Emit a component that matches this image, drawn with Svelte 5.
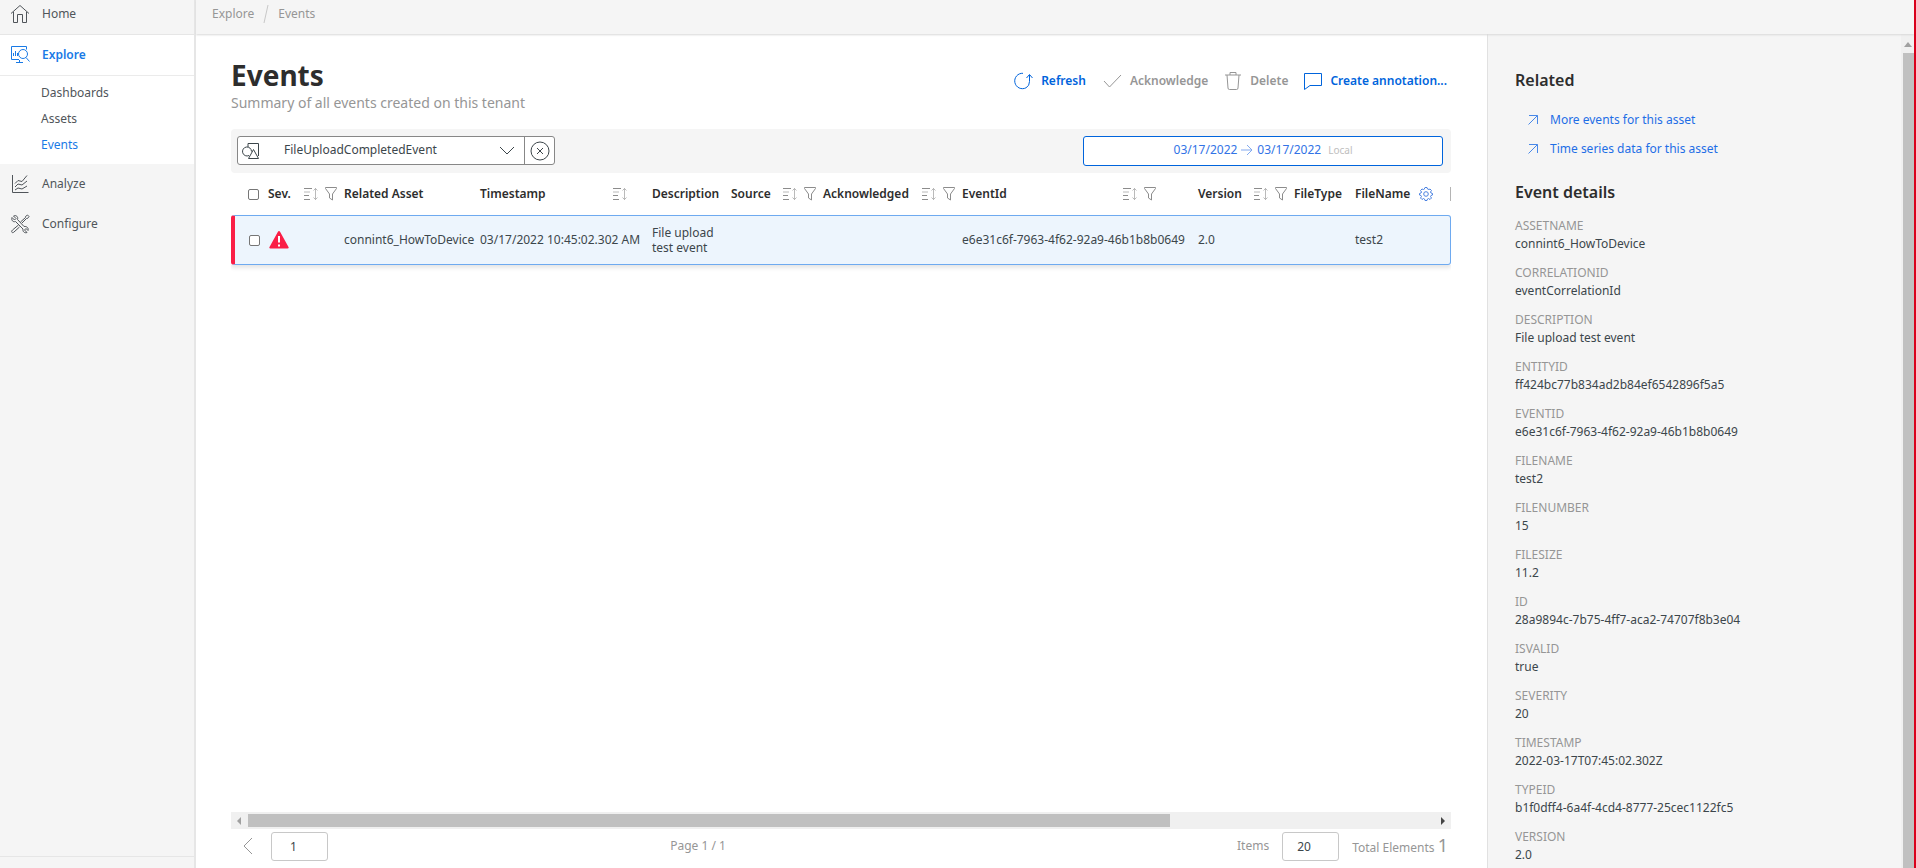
<script>
    let page = "1";
    let pageSize = "20";
    let typeFilter = "FileUploadCompletedEvent";
    let allChecked = false;
    let rowChecked = false;

    const subItems = ["Dashboards", "Assets", "Events"];

    const columns = [
        { name: "Sev.", width: 76, sort: true, filter: true },
        { name: "Related Asset", width: 136 },
        { name: "Timestamp", width: 172, sort: true, wide: true },
        { name: "Description", width: 79 },
        { name: "Source", width: 92, sort: true, filter: true },
        { name: "Acknowledged", width: 139, sort: true, filter: true },
        { name: "EventId", width: 236, sort: true, filter: true, wider: true },
        { name: "Version", width: 96, sort: true, filter: true },
        { name: "FileType", width: 61 },
    ];

    const details = [
        ["ASSETNAME", "connint6_HowToDevice"],
        ["CORRELATIONID", "eventCorrelationId"],
        ["DESCRIPTION", "File upload test event"],
        ["ENTITYID", "ff424bc77b834ad2b84ef6542896f5a5"],
        ["EVENTID", "e6e31c6f-7963-4f62-92a9-46b1b8b0649"],
        ["FILENAME", "test2"],
        ["FILENUMBER", "15"],
        ["FILESIZE", "11.2"],
        ["ID", "28a9894c-7b75-4ff7-aca2-74707f8b3e04"],
        ["ISVALID", "true"],
        ["SEVERITY", "20"],
        ["TIMESTAMP", "2022-03-17T07:45:02.302Z"],
        ["TYPEID", "b1f0dff4-6a4f-4cd4-8777-25cec1122fc5"],
        ["VERSION", "2.0"],
    ];
</script>

<div class="app">
    <nav class="sidebar">
        <a class="item home" href="#home">
            <svg width="20" height="20" viewBox="0 0 20 20">
                <path d="M1 9.500 10 1.500l9 8M3.500 8v10.500h4v-8h5v8h4V8" />
            </svg>
            Home
        </a>
        <a class="item active" href="#explore">
            <svg width="20" height="20" viewBox="0 0 20 20">
                <path d="M9 14.500H1.500v-13h15v3M6 17.500h7M9.500 15v2.500M3.500 8v3M5.500 6v5M7.500 8v3" />
                <circle cx="13" cy="9" r="4.500" />
                <path d="m16 12.500 3.500 4" />
            </svg>
            Explore
        </a>
        <ul>
            {#each subItems as item}
                <li><a href="#{item}" class:current={item === "Events"}>{item}</a></li>
            {/each}
        </ul>
        <a class="item" href="#analyze">
            <svg width="20" height="20" viewBox="0 0 20 20">
                <path d="M2.500 1v17.500h16M5 9.500l3-3 4 1 5-6M5 13l3-3 4 1 5-4M5 16l3-2 4 1 5-3" />
            </svg>
            Analyze
        </a>
        <a class="item" href="#configure">
            <svg width="20" height="20" viewBox="0 0 20 20">
                <path d="M2 3.500 4.500 6 6 4.500 3.500 2C6 .5 8.500 3 7.500 5.500l6.500 7c2.500-.5 5 1.500 4 4L16 14.500 14.500 16l2.500 2.500c-2.500 1-4.500-1-4-3.500L5.500 7.500C3 8.500 1 6 2 3.500Z" />
                <path d="m10.500 8 5-4.500V2.500L17.500 1 19 2.500 17.500 4.500h-1L12 9M8.500 11 2.500 16c-2 2 0 3.500 1.500 2L9.500 13" />
            </svg>
            Configure
        </a>
        <div class="nav-end"></div>
    </nav>

    <header class="topbar">
        <a href="#explore">Explore</a>
        <svg width="6" height="20" viewBox="0 0 6 20"><path d="M5 1 1 19" /></svg>
        <a href="#events">Events</a>
    </header>

    <main>
        <div class="heading">
            <div>
                <h1>Events</h1>
                <p>Summary of all events created on this tenant</p>
            </div>
            <div class="actions">
                <button>
                    <svg width="20" height="20" viewBox="0 0 20 20">
                        <path d="M10 2.300a7.700 7.700 0 1 0 3 14.500q3.500-1.800 3.500-6.300V4M13.500 7l3-3.500 3 3.500" />
                    </svg>
                    Refresh
                </button>
                <button disabled>
                    <svg width="20" height="20" viewBox="0 0 20 20"><path d="m2 10 5.500 6L19 4" /></svg>
                    Acknowledge
                </button>
                <button disabled>
                    <svg width="18" height="20" viewBox="0 0 18 20">
                        <path d="M1 4h16M6 4V1.500h6V4M3 4l1 13q0 1.500 1.500 1.500h7q1.500 0 1.500-1.500l1-13" />
                    </svg>
                    Delete
                </button>
                <button>
                    <svg width="18" height="20" viewBox="0 0 18 20"><path d="M.5 2.500h17v12H6l-5.500 4Z" /></svg>
                    Create annotation...
                </button>
            </div>
        </div>

        <div class="filters">
            <div class="type">
                <svg width="18" height="18" viewBox="0 0 18 18">
                    <path d="M6 5V1.500h10.500V14M6.500 16.500l5-9 5 9Z" />
                    <path d="M7 13.500a4.500 4.500 0 1 1 2.500-4" />
                </svg>
                <select aria-label="Event type" bind:value={typeFilter}>
                    <option>FileUploadCompletedEvent</option>
                </select>
                <svg class="chevron" width="16" height="10" viewBox="0 0 16 10"><path d="m1 1 7 7 7-7" /></svg>
                <button aria-label="Clear event type">
                    <svg width="20" height="20" viewBox="0 0 20 20">
                        <circle cx="10" cy="10" r="9" />
                        <path d="m7 7 6 6m0-6-6 6" />
                    </svg>
                </button>
            </div>
            <button class="range">
                03/17/2022
                <svg width="12" height="12" viewBox="0 0 12 12"><path d="M0 6h11M6 1l5 5-5 5" /></svg>
                03/17/2022
                <small>Local</small>
            </button>
        </div>

        <div class="grid">
            <table>
                <colgroup>
                    <col style="width:37px" />
                    {#each columns as c}
                        <col style="width:{c.width}px" />
                    {/each}
                    <col />
                </colgroup>
                <thead>
                    <tr>
                        <th class="check"><input type="checkbox" aria-label="Select all" bind:checked={allChecked} /></th>
                        {#each columns as c}
                            <th>
                                <div class="th" class:wide={c.wide} class:wider={c.wider}>
                                    {c.name}
                                    {#if c.sort}
                                        <svg class="sort" width="14" height="14" viewBox="0 0 14 14">
                                            <path d="M0 1.500h8M0 8.500h5M0 12.500h6" />
                                            <path class="pale" d="M0 5h6M11.500 1.500v11M9.500 3.500l2-2 2 2M9.500 10.500l2 2 2-2" />
                                        </svg>
                                    {/if}
                                    {#if c.filter}
                                        <svg width="12" height="14" viewBox="0 0 12 14">
                                            <path d="M.5.5h11v1L7.500 7v6l-3-2V7L.5 1.500Z" />
                                        </svg>
                                    {/if}
                                </div>
                            </th>
                        {/each}
                        <th>
                            <div class="th last">
                                FileName
                                <button class="gear" aria-label="Columns">
                                    <svg width="14" height="14" viewBox="0 0 14 14">
                                        <path d="m5.500 1 .5-.5h2l.5 1.500 1.500.5L11 2l1.500 1.500L11.500 5l.5 1 1.500.5v1.500l-1.500.5-.5 1 1 1.500-1.500 1.500-1.500-1-1 .5-.5 1.500H6L5.500 12l-1-.5-1.500 1L1.500 11l1-1.500-.5-1L.5 8V6.500L2 6l.5-1-1-1.500L3 2l1.500.5 1-.5Z" />
                                        <circle cx="7" cy="7" r="2.300" />
                                    </svg>
                                </button>
                            </div>
                        </th>
                    </tr>
                </thead>
                <tbody>
                    <tr>
                        <td class="check"><input type="checkbox" aria-label="Select event" bind:checked={rowChecked} /></td>
                        <td>
                            <svg class="alert" width="20" height="18" viewBox="0 0 20 18">
                                <path d="M10 0q.7 0 1.200 1l8.300 15q.7 1.500-1 1.500h-17q-1.700 0-1-1.500L8.800 1Q9.300 0 10 0Z" />
                                <path class="mark" d="M10 5v6.500M10 13.500v2" />
                            </svg>
                        </td>
                        <td>connint6_HowToDevice</td>
                        <td>03/17/2022 10:45:02.302 AM</td>
                        <td class="wrap">File upload test event</td>
                        <td></td>
                        <td></td>
                        <td>e6e31c6f-7963-4f62-92a9-46b1b8b0649</td>
                        <td>2.0</td>
                        <td></td>
                        <td>test2</td>
                    </tr>
                </tbody>
            </table>
        </div>

        <div class="hscroll">
            <svg width="6" height="8" viewBox="0 0 6 8"><path d="M5 0v8L1 4Z" /></svg>
            <div class="track"><div class="thumb"></div></div>
            <svg class="dark" width="6" height="8" viewBox="0 0 6 8"><path d="M1 0v8l4-4Z" /></svg>
        </div>

        <footer>
            <div class="pager">
                <button aria-label="Previous page">
                    <svg width="10" height="18" viewBox="0 0 10 18"><path d="M9 1 1 9l8 8" /></svg>
                </button>
                <input aria-label="Page" bind:value={page} />
            </div>
            <span>Page 1 / 1</span>
            <div class="totals">
                <label for="items">Items</label>
                <input id="items" bind:value={pageSize} />
                <span>Total Elements <b>1</b></span>
            </div>
        </footer>
    </main>

    <aside>
        <div class="panel">
            <h2>Related</h2>
            <div class="links">
                {#each ["More events for this asset", "Time series data for this asset"] as link}
                    <a href="#related">
                        <svg width="10" height="10" viewBox="0 0 10 10"><path d="M1 .5h8.500V9M9.500.5l-9 9" /></svg>
                        {link}
                    </a>
                {/each}
            </div>
            <h2>Event details</h2>
            <dl>
                {#each details as [key, value]}
                    <dt>{key}</dt>
                    <dd>{value}</dd>
                {/each}
            </dl>
        </div>
        <div class="vscroll">
            <svg width="8" height="5" viewBox="0 0 8 5"><path d="M4 0 8 5H0Z" /></svg>
            <div class="thumb"></div>
        </div>
    </aside>
</div>

<style>
    :global(body) {
        margin: 0;
    }

    .app {
        box-sizing: border-box;
        height: 100vh;
        display: grid;
        grid-template-columns: 196px minmax(0, 1fr) 427px;
        grid-template-rows: 34px minmax(0, 1fr);
        border-right: 2px solid #d9001b;
        background: #fff;
        color: #3c464b;
        font: 12px/18px "Noto Sans", sans-serif;
        overflow: hidden;
    }

    a {
        color: inherit;
        text-decoration: none;
    }

    svg {
        flex: none;
        fill: none;
        stroke: currentColor;
    }

    button,
    input,
    select {
        box-sizing: border-box;
        margin: 0;
        padding: 0;
        border: 0;
        background: none;
        color: inherit;
        font: inherit;
    }

    .sidebar {
        box-sizing: border-box;
        grid-row: 1 / 3;
        display: flex;
        flex-direction: column;
        border-right: 2px solid #e6e6e6;
        background: #f5f5f5;
        color: #50555a;
    }

    .item {
        display: flex;
        align-items: center;
        gap: 12px;
        height: 40px;
        padding-left: 10px;
    }

    .item.home {
        height: 27px;
        padding-bottom: 7px;
        border-bottom: 1px solid #e6e6e6;
    }

    .item.active {
        border-bottom: 1px solid #ebebeb;
        background: #fff;
        color: #197ae6;
        font-weight: 600;
    }

    ul {
        margin: 0;
        padding: 4px 0 6px;
        background: #fff;
        list-style: none;
    }

    li {
        padding-left: 41px;
        line-height: 26px;
    }

    .current {
        color: #197ae6;
    }

    .nav-end {
        height: 11px;
        margin-top: auto;
        border-top: 1px solid #e6e6e6;
    }

    .topbar {
        grid-column: 2 / 4;
        box-sizing: border-box;
        display: flex;
        align-items: center;
        gap: 9px;
        padding: 0 0 7px 16px;
        background: #f5f5f5;
        box-shadow: 0 1px 2px #d8d8d8;
        color: #969696;
        z-index: 1;
    }

    .topbar svg {
        color: #c8c8c8;
    }

    main {
        display: flex;
        flex-direction: column;
        padding: 24px 36px 4px 35px;
    }

    .heading {
        display: flex;
        justify-content: space-between;
        height: 71px;
    }

    h1 {
        margin: 0;
        color: #2d2d2d;
        font-size: 28px;
        line-height: 34px;
    }

    p {
        margin: 0;
        color: #969696;
        font-size: 14px;
        line-height: 22px;
    }

    .actions {
        display: flex;
        align-items: center;
        gap: 16px;
        height: 46px;
        padding-right: 4px;
    }

    .actions button {
        display: flex;
        align-items: center;
        gap: 8px;
        color: #0064dc;
        font-weight: 600;
        white-space: nowrap;
    }

    .actions button:disabled {
        color: #969696;
    }

    .filters {
        box-sizing: border-box;
        display: flex;
        align-items: flex-start;
        justify-content: space-between;
        height: 44px;
        padding: 7px 8px 0 6px;
        border-radius: 4px;
        background: #f5f5f5;
    }

    .type {
        box-sizing: border-box;
        display: flex;
        align-items: center;
        width: 318px;
        height: 29px;
        padding-left: 4px;
        border: 1px solid #878787;
        border-radius: 3px;
        background: #fff;
    }

    .type select {
        flex: 1;
        height: 27px;
        padding: 0 0 2px 24px;
        appearance: none;
    }

    .chevron {
        margin-right: 9px;
        pointer-events: none;
    }

    .type button {
        display: flex;
        align-items: center;
        justify-content: center;
        width: 30px;
        height: 27px;
        border-left: 1px solid #878787;
    }

    .range {
        display: flex;
        align-items: center;
        justify-content: center;
        gap: 4px;
        width: 360px;
        height: 30px;
        padding-bottom: 2px;
        border: 1px solid #0064dc;
        border-radius: 3px;
        background: #fff;
        color: #3273e6;
    }

    .range svg {
        opacity: 0.6;
    }

    small {
        padding-left: 3px;
        color: #bebebe;
        font-size: 10px;
    }

    .grid {
        flex: 1;
        min-height: 0;
        overflow: hidden;
    }

    table {
        width: 100%;
        table-layout: fixed;
        border-collapse: separate;
        border-spacing: 0;
    }

    th {
        height: 42px;
        padding: 0;
        color: #2d2d2d;
        font-weight: 600;
        text-align: left;
    }

    .th {
        display: flex;
        align-items: center;
        gap: 7px;
        padding-right: 7px;
        white-space: nowrap;
    }

    .th svg {
        color: #8c8c8c;
    }

    .th .sort {
        margin-left: auto;
    }

    .th.wide {
        padding-right: 25px;
    }

    .th.wider {
        padding-right: 42px;
    }

    .pale {
        opacity: 0.6;
    }

    .th.last {
        gap: 9px;
        padding-right: 0;
        border-right: 1px solid #b4b4b4;
        line-height: 14px;
    }

    .gear {
        display: flex;
    }

    .th .gear svg {
        color: #4b82e1;
    }

    .check {
        padding-left: 17px;
    }

    .check input {
        display: block;
        appearance: none;
        width: 11px;
        height: 11px;
        border: 1px solid #767676;
        border-radius: 2px;
        background: #fff;
    }

    td {
        height: 48px;
        padding: 0;
        border-top: 1px solid #6eaaf0;
        border-bottom: 1px solid #6eaaf0;
        background: #edf5fd;
        white-space: nowrap;
    }

    td.check {
        padding-left: 14px;
        border-left: 4px solid #fa1e46;
        border-radius: 3px 0 0 3px;
    }

    td:last-child {
        border-right: 1px solid #6eaaf0;
        border-radius: 0 3px 3px 0;
    }

    tbody tr {
        box-shadow: 0 3px 4px #e6e6e6;
    }

    .wrap {
        padding-right: 8px;
        line-height: 15px;
        white-space: normal;
    }

    .alert {
        display: block;
        margin-left: 1px;
        fill: #fa1e46;
        stroke: none;
    }

    .alert .mark {
        stroke: #fff;
        stroke-width: 2;
    }

    .hscroll {
        display: flex;
        align-items: center;
        gap: 6px;
        height: 17px;
        padding: 0 5px;
        background: #f0f0f0;
    }

    .hscroll svg,
    .vscroll svg {
        fill: #a0a0a0;
        stroke: none;
    }

    .hscroll .dark {
        fill: #464646;
    }

    .track {
        flex: 1;
        display: grid;
        grid-template-columns: 7fr 2fr;
    }

    .track .thumb {
        height: 13px;
        background: #c0c0c0;
    }

    footer {
        display: flex;
        align-items: center;
        height: 34px;
        padding-bottom: 1px;
        color: #969696;
    }

    .pager {
        box-sizing: border-box;
        display: flex;
        align-items: center;
        gap: 18px;
        width: 36%;
        padding-left: 12px;
    }

    .pager button {
        display: flex;
    }

    footer input {
        width: 57px;
        height: 29px;
        padding-left: 18px;
        border: 1px solid #c8c8c8;
        border-radius: 3px;
        color: #3c464b;
    }

    footer input#items {
        padding-left: 14px;
    }

    .totals {
        display: flex;
        align-items: center;
        gap: 13px;
        margin-left: auto;
        padding-right: 3px;
        white-space: nowrap;
    }

    .totals b {
        font-size: 18px;
        font-weight: 400;
    }

    aside {
        display: flex;
        border-left: 1px solid #e1e1e1;
        background: #f5f5f5;
        overflow: hidden;
    }

    .panel {
        flex: 1;
        padding: 34px 20px 0 27px;
    }

    h2 {
        margin: 0;
        color: #2d2d2d;
        font-size: 16px;
        font-weight: 600;
        line-height: 24px;
    }

    .links {
        padding: 13px 0 17px 13px;
        color: #1e6ee6;
    }

    .links a {
        display: flex;
        align-items: center;
        gap: 12px;
        height: 29px;
    }

    .links svg {
        opacity: 0.8;
    }

    dl {
        margin: 0;
        padding-top: 13px;
    }

    dt {
        color: #969696;
    }

    dd {
        margin: 0 0 11px;
    }

    .vscroll {
        display: flex;
        flex-direction: column;
        align-items: center;
        gap: 6px;
        width: 13px;
        padding-top: 8px;
        background: #f0f0f0;
    }

    .vscroll .thumb {
        flex: 1;
        width: 11px;
        margin-left: 2px;
        background: #c0c0c0;
    }
</style>
